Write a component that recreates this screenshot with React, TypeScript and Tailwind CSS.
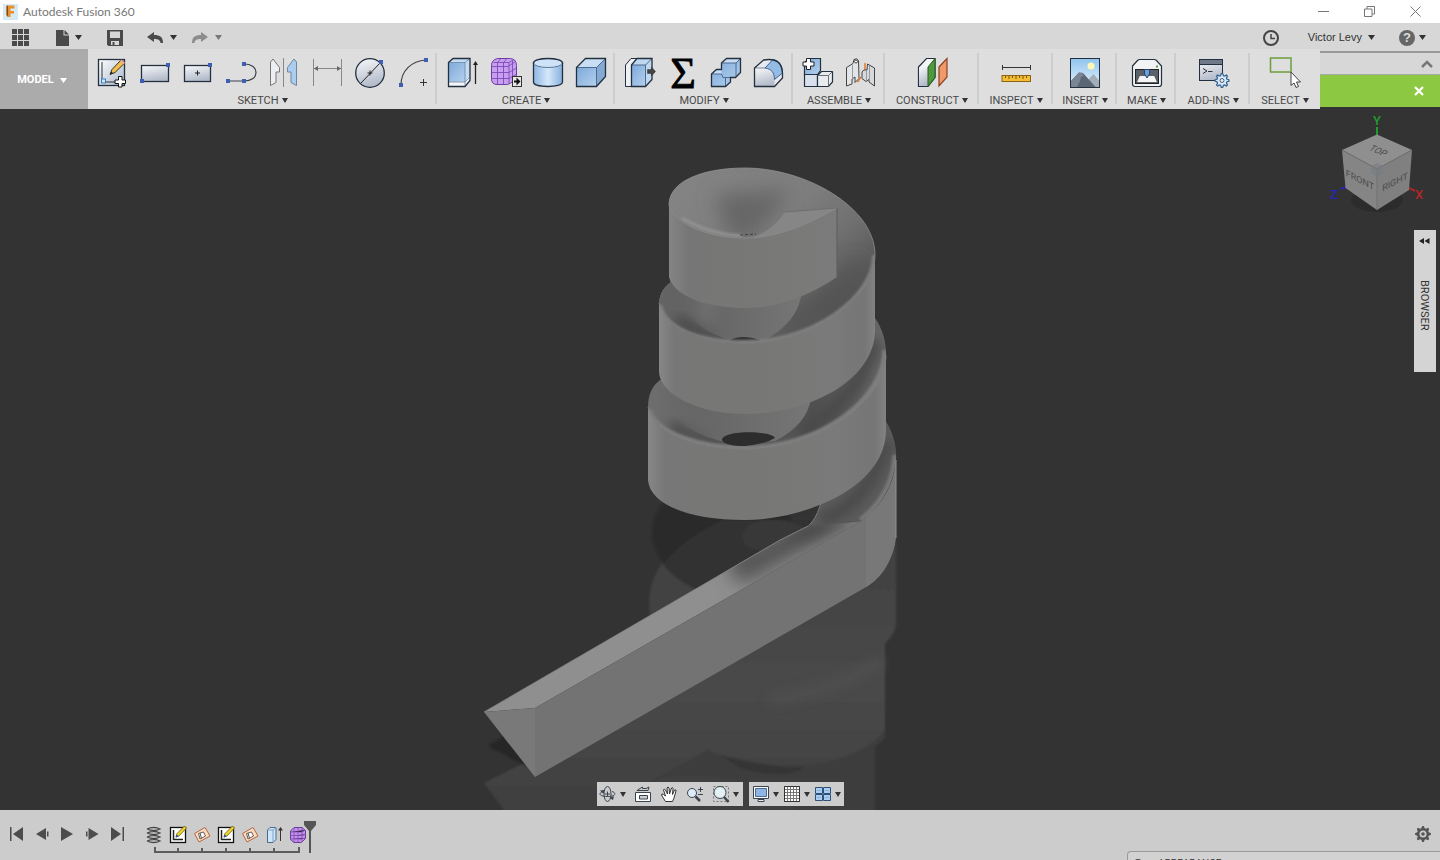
import React from 'react';
import clsx from 'clsx';

const INK = '#23303f';
const NODE = '#3f5fb5';

function Caret({ className, small }: { className?: string; small?: boolean }) {
  return (
    <svg
      viewBox="0 0 7 5"
      preserveAspectRatio="none"
      className={clsx('h-[5px] shrink-0', small ? 'w-[6px]' : 'w-[7px]', className ?? 'text-[#333]')}
      aria-hidden="true"
    >
      <path d="M0 0h7L3.500 5z" fill="currentColor" />
    </svg>
  );
}

function Node({ x, y }: { x: number; y: number }) {
  return <rect x={x - 2} y={y - 2} width="4" height="4" fill={NODE} />;
}

function Art({ children }: { children: React.ReactNode }) {
  return (
    <svg viewBox="0 0 32 32" className="size-8 overflow-visible" fill="none" aria-hidden="true">
      {children}
    </svg>
  );
}

// ---- ribbon artwork ----

const SketchIcon = () => (
  <Art>
    <rect x="2.500" y="2.500" width="26" height="26" fill="url(#paper)" stroke={INK} strokeWidth="1.300" />
    <path d="M6 5v20h19" stroke="#333" />
    <rect x="5.500" y="22" width="4" height="4" fill="#cfe3f8" stroke="#3c7cc0" />
    <path d="M14 17.500l2-5L25.500 2.500l3.500 3.200L19 15.500z" fill="#f2c14b" stroke="#3a3020" />
    <path d="M24 4l1.500-1.500 3.500 3.200-1.700 1.700z" fill="#e9a9a0" />
    <path d="M14 17.500l1.200-3 2 1.800z" fill="#222" />
    <path d="M22.500 19.500h3.500v3.500h3.500v3.500h-3.500v3.500h-3.500v-3.500h-3.500v-3.500h3.500z" fill="#fff" stroke="#111" />
  </Art>
);

const RectIcon = () => (
  <Art>
    <rect x="2.500" y="8.500" width="27" height="16" fill="url(#steel)" stroke={INK} strokeWidth="1.300" />
    <Node x={29} y={8} />
    <Node x={3} y={24} />
  </Art>
);

const CenterRectIcon = () => (
  <Art>
    <rect x="2.500" y="8.500" width="26" height="16" fill="url(#steel)" stroke={INK} strokeWidth="1.300" />
    <path d="M15.500 13.500v5M13 16h5" stroke="#222" />
    <Node x={28} y={8} />
  </Art>
);

const LineIcon = () => (
  <Art>
    <path d="M3 24h16c7 0 12-3 12-8.500S26 7 19 7" stroke="#3b4148" strokeWidth="1.200" />
    <Node x={19} y={7} />
    <Node x={3} y={24} />
    <Node x={19} y={24} />
  </Art>
);

const MirrorIcon = () => (
  <Art>
    <path d="M15.500 1v29" stroke="#888" />
    <path d="M2.500 5l2.500-3 6.500 8.500v4.500h-3.500v10.500L2.500 28.500z" fill="#eceff1" stroke="#777" />
    <path d="M28.500 5L26 2l-6.500 8.500v4.500H23v10.500l5.500 3z" fill="#a9cdf0" stroke="#71859b" />
  </Art>
);

const DimensionIcon = () => (
  <Art>
    <path d="M2.500 2v27M30.500 2v27M3 11.500h27" stroke="#888" />
    <path d="M3 11.500l4-2.500v5zM30 11.500L26 9v5z" fill="#666" />
  </Art>
);

const CircleIcon = () => (
  <Art>
    <circle cx="16" cy="16" r="14.300" fill="url(#steel)" stroke={INK} strokeWidth="1.300" />
    <path d="M7 26L27 5M16 13.500v5M13.500 16h5" stroke="#222" />
    <Node x={27} y={5} />
  </Art>
);

const ArcIcon = () => (
  <Art>
    <path d="M4 28C4 14 14 4 29 3" stroke="#444" strokeWidth="1.200" />
    <path d="M26.500 22v7M23 25.500h7" stroke="#333" />
    <Node x={4} y={28} />
    <Node x={29} y={3} />
  </Art>
);

const ExtrudeIcon = () => (
  <Art>
    <path d="M2.500 5.500L7 1.500h17v22l-5 6H2.500z" fill="#c5dbf2" />
    <path d="M2.500 5.500h16.500v19H2.500z" fill="url(#blue)" />
    <path d="M2.500 25h16.500l5-6v4.500l-5 6H2.500z" fill="#f4f6f8" />
    <path d="M2.500 5.500h16.500L24 1.500M19 5.500v24M2.500 25h16.500l5-5" stroke="#6b86a5" strokeWidth=".8" />
    <path d="M2.500 5.500L7 1.500h17v22l-5 6H2.500z" stroke={INK} strokeWidth="1.300" />
    <path d="M29.500 6v21" stroke="#222" strokeWidth="1.300" />
    <path d="M27 8l2.500-4L32 8z" fill="#222" />
  </Art>
);

const FormIcon = () => (
  <Art>
    <path d="M8.500 1.500h12q7 0 7 7v10q0 3-3 5.500t-6 3.500H8q-5.500 0-5.500-6V8.500q0-5.500 6-7z" fill="#c99ef0" stroke="#6b3fa0" />
    <path
      d="M3 9.500h16l7.500-5M3 15.500h17l7.500-4.500M3 21.500h17l7-4M8.500 5.500v22M14.500 5.500v22M20 6v21M4.500 5.500h15.500L25 2.500M8.500 5.500L12 1.500M14.500 5.500L18 1.500M23.500 3.500v21"
      stroke="#7c4cb8"
      strokeWidth=".9"
    />
    <rect x="23.500" y="19.500" width="9" height="10" fill="#e8e8e8" stroke="#333" />
    <path d="M25 23.500h2.500v-3l4 4-4 4v-3H25z" fill="#111" />
  </Art>
);

const CylinderIcon = () => (
  <Art>
    <path d="M1.500 6v19c0 6 29 6 29 0V6z" fill="url(#tube)" stroke={INK} strokeWidth="1.300" />
    <ellipse cx="16" cy="6" rx="14.500" ry="4.500" fill="#cfe3f8" stroke="#5d7794" />
    <path d="M1.500 7V6C1.500 0 30.500 0 30.500 6v1" stroke={INK} strokeWidth="1.300" />
  </Art>
);

const BoxIcon = () => (
  <Art>
    <path d="M1.500 10.500l9-9h20v18l-9 10h-20z" fill="#c9def4" />
    <path d="M1.500 10.500h20v19h-20z" fill="url(#blue)" />
    <path d="M21.500 10.500l9-9v18l-9 10z" fill="#84a9d2" />
    <path d="M1.500 10.500h20l9-9M21.500 10.500v19" stroke="#4d6b8e" />
    <path d="M1.500 10.500l9-9h20v18l-9 10h-20z" stroke={INK} strokeWidth="1.300" />
  </Art>
);

const PressPullIcon = () => (
  <Art>
    <path d="M1.500 8L7 1.500h8v28H1.500z" fill="#eef1f4" stroke={INK} />
    <path d="M7.500 8L13 1.500h15v21l-6.500 7h-14z" fill="#bfd8f0" />
    <path d="M7.500 8h14v21.500h-14z" fill="url(#blue)" />
    <path d="M7.500 8h14L28 1.500M21.500 8v21" stroke="#4d6b8e" />
    <path d="M7.500 8L13 1.500h15v21l-6.500 7h-14z" stroke={INK} strokeWidth="1.300" />
    <path d="M23.500 12.500h4V10l4 4.500-4 4.500v-2.500h-4z" fill="#444" stroke="#333" strokeWidth=".5" />
  </Art>
);

const SigmaIcon = () => (
  <Art>
    <text x="16" y="31" textAnchor="middle" fontSize="44" fontFamily="Liberation Serif, serif" fill="#000" stroke="#000" strokeWidth=".8">
      Σ
    </text>
  </Art>
);

const CombineIcon = () => (
  <Art>
    <path d="M1.500 17l5-4.500h5V6l5-4.500h14v14l-5 5h-5V25l-5 4.500h-14z" fill="url(#blue)" />
    <path d="M1.500 17l5-4.500h5V17zM11.500 6l5-4.500h14L26 6z" fill="#c9def4" />
    <path d="M1.500 17h10l1.500 3.500h7.500M11.500 6H26l4.500-4.500M26 6v14M15.500 21v8" stroke="#4d6b8e" />
    <path d="M1.500 17l5-4.500h5V6l5-4.500h14v14l-5 5h-5V25l-5 4.500h-14z" stroke={INK} strokeWidth="1.300" />
  </Art>
);

const FilletIcon = () => (
  <Art>
    <path d="M1.500 11l9-8c12-2 18.500 2 19 13v5l-8 8.500H1.500z" fill="#e7eaee" />
    <path d="M1.500 11H12c6 1 9.500 5 9.500 11.500v7h-20z" fill="url(#steel)" />
    <path d="M12 11l8-8.500c6 1 9 5 9.500 13.500l-8 6.500c0-7-3-10.500-9.500-11.500z" fill="#94bbe6" stroke="#41658f" />
    <path d="M1.500 11H12" stroke="#7b8894" />
    <path d="M1.500 11l9-8c12-2 18.500 2 19 13v5l-8 8.500H1.500z" stroke={INK} strokeWidth="1.300" />
  </Art>
);

const ComponentIcon = () => (
  <Art>
    <path d="M2.500 6l4-4.500h12v12l-3 4H2.500z" fill="url(#blue)" stroke={INK} strokeWidth="1.200" />
    <path d="M2.500 17.500h13v12h-13z" fill="#d9e2ec" stroke={INK} strokeWidth="1.200" />
    <path d="M15.500 18.500l4-4h11v10.500l-4 4.500h-11z" fill="#e9ecef" stroke={INK} strokeWidth="1.200" />
    <path d="M15.500 18.500h11l4-4M26.500 18.500v11" stroke="#68737e" />
    <path d="M4.500 1.500h4v3.500h3.500v4H8.500v3.500h-4V9H1V5h3.500z" fill="#fff" stroke="#222" />
  </Art>
);

const JointIcon = () => (
  <Art>
    <path d="M1.500 10.500L8 6.500l1-4q3-2 4.500 1l.500 18-4 4V20l-3 2v5l-5.500 2z" fill="#e3e6e9" stroke="#444" />
    <circle cx="11" cy="4.500" r="1.500" fill="#fff" stroke="#444" />
    <path d="M7.500 8v14" stroke="#999" />
    <path d="M12.500 25l3.500-5M20 6v7" stroke="#e47a2e" strokeWidth="1.500" />
    <path d="M17 15q1-3 5-2l.500-6 7 4v18l-5.500-4v-2.500l-3 2-4-3z" fill="#d6dade" stroke="#444" />
    <path d="M21.500 14v9M24.500 9v14" stroke="#999" />
  </Art>
);

const ConstructIcon = () => (
  <Art>
    <path d="M2.500 10l8-8.500h8.500v19l-7 9H2.500z" fill="#f4f6f8" stroke={INK} strokeWidth="1.200" />
    <path d="M3 10.500h9v18.500H3z" fill="url(#steel)" />
    <path d="M12 10l7-8.500v19l-7 9z" fill="#4f9a3c" stroke="#245a1c" />
    <path d="M23 10l8-8.500v18.500l-8 9z" fill="#f09a6a" stroke="#8b4220" strokeWidth="1.200" />
  </Art>
);

const InspectIcon = () => (
  <Art>
    <path d="M2.500 8v5M30.500 8v5M3 10.500h27" stroke="#333" />
    <rect x="2" y="18.500" width="28.500" height="6" fill="#f3bd35" stroke="#8c6414" />
    <path d="M5.500 19v2M9 19v3M12.500 19v2M16 19v3M19.500 19v2M23 19v3M26.500 19v2" stroke="#6b4a0c" strokeWidth=".9" />
  </Art>
);

const InsertIcon = () => (
  <Art>
    <rect x="1.500" y="1.500" width="29" height="29" fill="url(#sky)" />
    <circle cx="22" cy="9" r="3.500" fill="#fff6b8" />
    <path d="M12 30l12.500-13 6 7v6.500z" fill="#a3adb8" />
    <path d="M2 24l8-8.500 4 .5 13 14.500H2z" fill="#5b6573" />
    <path d="M10 15.500l3 .5 2 3-3 1-1 4-3 6H2v-6z" fill="#7b8694" />
    <rect x="1.500" y="1.500" width="29" height="29" stroke={INK} />
  </Art>
);

const MakeIcon = () => (
  <Art>
    <path d="M1.500 9l5-5.500q1-1 2.500-1h14q1.500 0 2.500 1l5 5.500v18q0 2.500-2.500 2.500H4q-2.500 0-2.500-2.500z" fill="#f1f2f3" stroke={INK} strokeWidth="1.200" />
    <rect x="4.500" y="12.500" width="23" height="14" fill="#59616a" stroke="#222" />
    <path d="M8.500 18.500h15l3 7h-21z" fill="#f3f5f7" stroke="#333" strokeWidth=".6" />
    <path d="M13.500 12.500h5v4.500L16 21l-2.500-4z" fill="#6d9fd6" stroke="#24476f" />
    <rect x="25" y="8.500" width="2" height="2" fill="#4f9a3c" />
  </Art>
);

function gearPath(cx: number, cy: number, outer: number, inner: number) {
  const pts: string[] = [];
  for (let i = 0; i < 32; i++) {
    const r = i % 4 < 2 ? outer : inner;
    const a = ((i - 0.5) / 32) * Math.PI * 2;
    pts.push(`${(cx + r * Math.cos(a)).toFixed(2)} ${(cy + r * Math.sin(a)).toFixed(2)}`);
  }
  return `M${pts.join('L')}Z`;
}

const AddInsIcon = () => (
  <Art>
    <rect x="2.500" y="2.500" width="23" height="21" fill="url(#steel)" stroke={INK} />
    <path d="M3 3h22v4H3z" fill="#6f7987" />
    <path d="M2.500 7.500h23" stroke={INK} />
    <path d="M6 11.500l4 2.500-4 2.500M11 14.500h4.500" stroke="#333" />
    <path d={gearPath(25, 23.500, 7, 5)} fill="#dcebfa" stroke="#34618f" strokeWidth="1.200" />
    <circle cx="25" cy="23.500" r="2" fill="#eee" stroke="#34618f" />
  </Art>
);

const SelectIcon = () => (
  <Art>
    <rect x="1.500" y="1" width="20.500" height="14" stroke="#6c9f3c" strokeWidth="1.500" />
    <path d="M22 15v13.500l3-2.500 2 4.500 2.500-1-2-4.500h4z" fill="#fff" stroke="#444" />
  </Art>
);

const ribbon = [
  { label: 'Sketch', width: 'w-[349px]', tools: [
    ['Create sketch', SketchIcon], ['Two point rectangle', RectIcon], ['Center rectangle', CenterRectIcon], ['Line', LineIcon],
    ['Mirror', MirrorIcon], ['Dimension', DimensionIcon], ['Circle', CircleIcon], ['Arc', ArcIcon],
  ] },
  { label: 'Create', width: 'w-[178px]', tools: [['Extrude', ExtrudeIcon], ['Form', FormIcon], ['Cylinder', CylinderIcon], ['Box', BoxIcon]] },
  { label: 'Modify', width: 'w-[178px]', tools: [['Press pull', PressPullIcon], ['Parameters', SigmaIcon], ['Combine', CombineIcon], ['Fillet', FilletIcon]] },
  { label: 'Assemble', width: 'w-[92px]', tools: [['New component', ComponentIcon], ['Joint', JointIcon]] },
  { label: 'Construct', width: 'w-[94px]', tools: [['Offset plane', ConstructIcon]] },
  { label: 'Inspect', width: 'w-[74px]', tools: [['Measure', InspectIcon]] },
  { label: 'Insert', width: 'w-[64px]', tools: [['Insert image', InsertIcon]] },
  { label: 'Make', width: 'w-[59px]', tools: [['3D print', MakeIcon]] },
  { label: 'Add-Ins', width: 'w-[74px]', tools: [['Scripts', AddInsIcon]] },
  { label: 'Select', width: 'w-[70px]', tools: [['Select tool', SelectIcon]] },
] as { label: string; width: string; tools: [string, React.FC][] }[];

function SharedGradients() {
  return (
    <svg className="absolute size-0" aria-hidden="true">
      <defs>
        <linearGradient id="paper" x1="0" y1="0" x2="1" y2="1">
          <stop offset="0" stopColor="#fff" />
          <stop offset="1" stopColor="#a9b6cc" />
        </linearGradient>
        <linearGradient id="steel" x1="0" y1="0" x2=".3" y2="1">
          <stop offset="0" stopColor="#f8f9fb" />
          <stop offset="1" stopColor="#b4bccb" />
        </linearGradient>
        <linearGradient id="blue" x1="0" y1="0" x2="1" y2="1">
          <stop offset="0" stopColor="#7da9da" />
          <stop offset="1" stopColor="#b5d1ee" />
        </linearGradient>
        <linearGradient id="tube">
          <stop offset="0" stopColor="#8db6e4" />
          <stop offset=".5" stopColor="#d5e8fa" />
          <stop offset="1" stopColor="#86b0de" />
        </linearGradient>
        <linearGradient id="sky" x1="0" y1="0" x2="0" y2="1">
          <stop offset="0" stopColor="#8fc4ee" />
          <stop offset="1" stopColor="#e6f3fc" />
        </linearGradient>
      </defs>
    </svg>
  );
}

function TitleBar() {
  return (
    <header className="flex h-[23px] items-center bg-white pl-[3px] pr-[2px]">
      <svg viewBox="0 0 15 16" className="h-4 w-[15px]" aria-hidden="true">
        <rect width="15" height="16" fill="#d4ebf5" />
        <path d="M4 1.500h7.500V4.500H7.500V7h3.500v2.500H7.500V13H5L3.500 11V2z" fill="#e8912f" />
        <path d="M3.500 2L5 1.500V13l-1.500-2z" fill="#8d4a12" />
      </svg>
      <h1 className="ml-[5px] flex-1 font-[Lato,sans-serif] text-[12px] text-[#777]">Autodesk Fusion 360</h1>
      <button aria-label="Minimize" className="flex w-[46px] justify-center">
        <svg viewBox="0 0 11 11" className="size-[11px]" stroke="#777"><path d="M0 5.500h11" /></svg>
      </button>
      <button aria-label="Restore" className="flex w-[46px] justify-center">
        <svg viewBox="0 0 11 11" className="size-[11px]" fill="none" stroke="#777">
          <path d="M.500 3h7.500v7.500H.500zM3 3V.500h7.500V8H8" />
        </svg>
      </button>
      <button aria-label="Close" className="flex w-[46px] justify-center">
        <svg viewBox="0 0 11 11" className="size-[11px]" stroke="#777"><path d="M.500.500l10 10M10.500.500l-10 10" /></svg>
      </button>
    </header>
  );
}

function QuickBar() {
  return (
    <div className="flex h-[26px] items-center bg-[#d7d7d7] pl-3 pr-[14px] pt-[3px] text-[#4a4a4a]">
      <button aria-label="Data panel">
        <svg viewBox="0 0 17 17" className="size-[17px]" fill="currentColor">
          <path d="M0 0h5v5H0zM6 0h5v5H6zM12 0h5v5h-5zM0 6h5v5H0zM6 6h5v5H6zM12 6h5v5h-5zM0 12h5v5H0zM6 12h5v5H6zM12 12h5v5h-5z" />
        </svg>
      </button>
      <button aria-label="File" className="ml-[27px] flex items-center gap-[6px]">
        <svg viewBox="0 0 13 16" className="h-4 w-[13px]" fill="currentColor">
          <path d="M0 0h7.500v5.500H13V16H0z" />
          <path d="M8.500 0L13 4.500H8.500z" />
        </svg>
        <Caret />
      </button>
      <button aria-label="Save" className="ml-[25px]">
        <svg viewBox="0 0 16 16" className="size-4">
          <path d="M0 0h16v16H1.500L0 14.500z" fill="currentColor" />
          <path d="M3 1.500h10V8H3zM4 11h8v4H4z" fill="#d7d7d7" />
          <path d="M5.500 12h2v3h-2z" fill="currentColor" />
        </svg>
      </button>
      <button aria-label="Undo" className="ml-6 flex items-center gap-[7px]">
        <svg viewBox="0 0 16 12" className="h-3 w-4" fill="currentColor">
          <path d="M0 5l7-5v3c6 0 9 2 9 8h-2.500c0-2.500-2-4-6.500-4v3z" />
        </svg>
        <Caret />
      </button>
      <button aria-label="Redo" className="ml-[15px] flex items-center gap-[7px] text-[#8d8d8d]">
        <svg viewBox="0 0 16 12" className="h-3 w-4" fill="currentColor">
          <path d="M16 5L9 0v3C3 3 0 5 0 11h2.500c0-2.500 2-4 6.500-4v3z" />
        </svg>
        <Caret className="text-[#777]" />
      </button>
      <div className="flex-1" />
      <button aria-label="Job status">
        <svg viewBox="0 0 16 16" className="size-4" fill="none" stroke="#444" strokeWidth="2">
          <circle cx="8" cy="8" r="7" />
          <path d="M8 4v4.500h4" strokeWidth="1.500" />
        </svg>
      </button>
      <button className="ml-[29px] flex items-center gap-[6px] font-['Liberation_Sans',sans-serif] text-[11px] text-[#333]">
        Victor Levy
        <Caret />
      </button>
      <button aria-label="Help" className="ml-6 flex items-center gap-1">
        <span className="flex size-4 items-center justify-center rounded-full bg-[#666] font-['Liberation_Sans',sans-serif] text-[13px] font-bold text-[#ddd]">
          ?
        </span>
        <Caret />
      </button>
    </div>
  );
}

function Ribbon() {
  return (
    <div className="flex">
      <button className="flex h-[60px] w-[88px] shrink-0 items-center justify-center gap-[6px] bg-[#ababab] pt-[2px] pr-1 text-[11px] font-bold text-white">
        MODEL
        <Caret className="text-white" />
      </button>
      <div className="flex h-[60px] flex-1 bg-[#dedede]">
        {ribbon.map((group) => (
          <section key={group.label} className={clsx('relative flex shrink-0 flex-col items-center pt-2', group.width)}>
            <div className="flex">
              {group.tools.map(([name, Icon]) => (
                <button key={name} aria-label={name} className="flex w-[43px] justify-center">
                  <Icon />
                </button>
              ))}
            </div>
            <button className="mt-[5px] flex items-center gap-[3px] text-[11px] leading-[13px] text-[#484848] uppercase">
              {group.label}
              <Caret small />
            </button>
            {group.label !== 'Select' && <span className="absolute top-1 right-0 h-[51px] w-[2px] bg-[#cdcdcd]" />}
          </section>
        ))}
      </div>
      <div className="w-[120px] shrink-0">
        <div className="h-1 border-b-2 border-[#999] bg-[#d7d7d7]" />
        <div className="flex h-[22px] justify-end border-b border-[#aaa] bg-[#d7d7d7] pr-[7px]">
          <button aria-label="Collapse ribbon">
            <svg viewBox="0 0 12 8" className="h-2 w-3" fill="none" stroke="#777" strokeWidth="2.500">
              <path d="M1 7l5-5 5 5" />
            </svg>
          </button>
        </div>
        <div className="flex h-8 items-center justify-end bg-[#8dc843] pr-4">
          <button aria-label="Dismiss notice">
            <svg viewBox="0 0 10 10" className="size-[10px]" stroke="#fff" strokeWidth="2.200">
              <path d="M1 1l8 8M9 1L1 9" />
            </svg>
          </button>
        </div>
      </div>
    </div>
  );
}

// Helix body, its ramp and the floor reflection, in canvas coordinates.
function Model() {
  return (
    <svg viewBox="0 109 1440 701" preserveAspectRatio="xMidYMid slice" className="absolute inset-0 size-full" role="img" aria-label="Helix model">
      <defs>
        <linearGradient id="band">
          <stop offset="0" stopColor="#878787" />
          <stop offset=".07" stopColor="#777" />
          <stop offset=".42" stopColor="#777775" />
          <stop offset=".8" stopColor="#7a7a7a" />
          <stop offset=".95" stopColor="#767676" />
          <stop offset="1" stopColor="#828282" />
        </linearGradient>
        <linearGradient id="block">
          <stop offset="0" stopColor="#848484" />
          <stop offset=".12" stopColor="#767676" />
          <stop offset=".5" stopColor="#787876" />
          <stop offset="1" stopColor="#7b7b7b" />
        </linearGradient>
        <linearGradient id="crown" gradientUnits="userSpaceOnUse" x1="700" y1="170" x2="830" y2="320">
          <stop offset="0" stopColor="#838383" />
          <stop offset=".45" stopColor="#7d7d7d" />
          <stop offset=".7" stopColor="#707070" />
          <stop offset="1" stopColor="#525252" />
        </linearGradient>
        <linearGradient id="gully" gradientUnits="userSpaceOnUse" x1="648" y1="0" x2="886" y2="0">
          <stop offset="0" stopColor="#6e6e6e" />
          <stop offset=".3" stopColor="#626262" />
          <stop offset=".7" stopColor="#505050" />
          <stop offset="1" stopColor="#686868" />
        </linearGradient>
        <linearGradient id="bowl">
          <stop offset="0" stopColor="#666" stopOpacity="0" />
          <stop offset=".4" stopColor="#686868" />
          <stop offset="1" stopColor="#767676" />
        </linearGradient>
        <linearGradient id="mirror" gradientUnits="userSpaceOnUse" x1="0" y1="560" x2="0" y2="810">
          <stop offset="0" stopColor="#424242" />
          <stop offset=".5" stopColor="#494949" />
          <stop offset="1" stopColor="#404040" />
        </linearGradient>
        <filter id="haze" x="-60%" y="-60%" width="220%" height="220%"><feGaussianBlur stdDeviation="10" /></filter>
        <filter id="soft" x="-50%" y="-50%" width="200%" height="200%"><feGaussianBlur stdDeviation="6" /></filter>
        <filter id="faint" x="-20%" y="-20%" width="140%" height="140%"><feGaussianBlur stdDeviation="1.200" /></filter>
        <clipPath id="crownClip">
          <path d="M669 205C669 180 705 168 745 168C805 168 875 207 875 255C875 300 810 343 745 343C700 343 663 328 659 303C660 293 664 287 670 283Z" />
        </clipPath>
        <clipPath id="gullyClip">
          <path d="M648 407C648 395 652 386 660 380H760L875 318C882 328 886 340 886 355C886 400 820 449 745 449C700 449 653 435 648 407Z" />
        </clipPath>
        <clipPath id="lowClip">
          <path d="M821 503L885 420C893 432 897 446 896 460C893 485 882 506 861 521L808 526C815 520 818 512 821 503Z" />
        </clipPath>
        <clipPath id="rampClip">
          <path d="M484 712L780 540L808 526L861 521L535 708Z" />
        </clipPath>
      </defs>

      {/* floor reflection */}
      <g filter="url(#faint)">
        <path d="M666 500C640 528 645 570 720 597L800 530L780 505Z" fill="#292929" />
        <path d="M650 613C646 575 670 545 722 520L815 520L760 560L652 620Z" fill="#303030" />
        <path d="M650 616C647 595 652 577 662 563C670 573 680 582 697 590Z" fill="#424242" />
        <path d="M742 536C744 520 775 514 805 527L765 551C750 550 743 545 742 536Z" fill="#393939" />
        <path d="M896 540V622C896 632 890 638 885 644V728C885 737 880 742 875 745V814H507L484 783L540 755L860 580Z" fill="url(#mirror)" />
        <path d="M708 750C750 772 850 776 885 730V738C880 744 876 745 875 747V814H600L640 787Z" fill="#3c3c3c" />
        <path d="M720 755C750 762 780 768 805 767C790 778 765 775 740 768Z" fill="#353535" opacity=".8" />
        <path d="M600 814L660 778C715 770 770 782 800 814Z" fill="#404040" />
      </g>
      <path d="M770 700Q840 690 882 660" stroke="#515151" strokeWidth="8" fill="none" filter="url(#soft)" />
      <path d="M488 746L504 736L530 768Z" fill="#272727" filter="url(#faint)" />

      {/* fourth turn and ramp */}
      <g clipPath="url(#lowClip)">
        <path d="M800 410H900V530H800Z" fill="#5c5c5c" />
        <path d="M820 520Q868 505 888 440" stroke="#4a4a4a" strokeWidth="14" fill="none" filter="url(#soft)" />
        <path d="M861 521Q894 495 896 455" stroke="#777" strokeWidth="7" fill="none" filter="url(#faint)" />
      </g>
      <g clipPath="url(#rampClip)">
        <path d="M480 500H870V720H480Z" fill="#8f8f8f" />
        <path d="M725 560L808 520L880 510L800 552L740 585Z" fill="#505050" filter="url(#haze)" />
        <path d="M775 545L808 524L850 518L815 536Z" fill="#4a4a4a" filter="url(#soft)" />
      </g>
      <path d="M535 708L861 521Q894 497 896 458V535C895 556 881 580 861 590L535 777Z" fill="#737373" />
      <path d="M866 517Q894 495 896 458V535C895 556 883 578 866 587Z" fill="#787878" />
      <path d="M896 460V538" stroke="#929292" />
      <path d="M484 712L535 708V777Z" fill="#797979" />
      <path d="M484 712L780 540L808 526C815 520 818 512 821 503" stroke="#858585" strokeWidth=".8" fill="none" />
      <path d="M808 526L861 521" stroke="#525252" strokeWidth=".7" />

      {/* third turn */}
      <g clipPath="url(#gullyClip)">
        <path d="M640 310H890V460H640Z" fill="url(#gully)" />
        <path d="M670 425Q690 438 730 442" stroke="#4c4c4c" strokeWidth="12" fill="none" filter="url(#soft)" />
        <path d="M800 432Q855 405 876 340" stroke="#484848" strokeWidth="14" fill="none" filter="url(#soft)" />
        <path d="M655 388Q675 435 735 444L775 441Q807 425 811 398L780 370Z" fill="url(#bowl)" />
        <path d="M648 410C655 435 700 449 745 449C820 449 886 400 886 350" stroke="#7e7e7e" strokeWidth="7" fill="none" filter="url(#faint)" />
        <path d="M722 440C722 430 770 430 775 438Q765 444 745 446Q725 446 722 440Z" fill="#2d2d2d" />
      </g>
      <path d="M648 407C653 435 700 449 745 449C820 449 886 400 886 355V430C886 490 800 520 745 520C690 520 650 505 648 480Z" fill="url(#band)" />
      <path d="M648 407C653 435 700 449 745 449C820 449 886 400 886 355" stroke="#838383" strokeWidth=".8" fill="none" />

      {/* second turn and crown */}
      <g clipPath="url(#crownClip)">
        <path d="M640 160H890V350H640Z" fill="url(#crown)" />
        <path d="M650 270H700V350H650Z" fill="#646464" filter="url(#soft)" />
        <path d="M675 320Q700 335 735 338" stroke="#4c4c4c" strokeWidth="14" fill="none" filter="url(#soft)" />
        <path d="M780 322Q840 300 858 262" stroke="#505050" strokeWidth="12" fill="none" filter="url(#haze)" />
        <path d="M715 195L790 190L765 225L748 240H730Z" fill="#666" filter="url(#haze)" />
        <path d="M675 290Q690 332 735 341L765 340Q797 322 801 296Z" fill="url(#bowl)" />
        <path d="M730 340Q742 334 760 340V343H730Z" fill="#333" />
        <path d="M659 305C665 331 700 343 745 343C810 343 875 300 875 255" stroke="#7e7e7e" strokeWidth="6" fill="none" filter="url(#faint)" />
      </g>
      <path d="M659 303C665 330 700 343 745 343C810 343 875 300 875 255V330C875 380 810 414 745 414C700 414 660 395 659 372Z" fill="url(#band)" />
      <path d="M659 303C665 330 700 343 745 343C810 343 875 300 875 255" stroke="#838383" strokeWidth=".8" fill="none" />
      <path d="M669 205C669 180 705 168 745 168C805 168 875 207 875 255" stroke="#909090" strokeWidth=".8" fill="none" />

      {/* first turn */}
      <path d="M785 212L837 208Q790 236 750 238Q772 232 785 212Z" fill="#868686" />
      <path d="M785 212L837 208" stroke="#6a6a6a" strokeWidth=".8" />
      <path d="M682 218Q708 234 742 236" stroke="#939393" strokeWidth="3" fill="none" filter="url(#faint)" />
      <path d="M669 205C675 225 710 238 745 238C780 238 812 222 837 208V277C810 295 780 308 745 308C710 308 675 298 669 277Z" fill="url(#block)" />
      <path d="M669 205C675 225 710 238 745 238C780 238 812 222 837 208" stroke="#8a8a8a" fill="none" />
      <path d="M837 208V277" stroke="#5d5d5d" />
      <path d="M740 235l16-1" stroke="#3d3d3d" strokeDasharray="3 2" />
    </svg>
  );
}

function ViewCube() {
  return (
    <svg viewBox="0 0 110 110" className="absolute top-[3px] right-[5px] size-[110px]" fontFamily="Roboto, sans-serif" fontSize="13">
      <ellipse cx="52" cy="88" rx="26" ry="12" fill="#2c2c2c" />
      <path d="M52 15v8" stroke="#1f9d2c" strokeWidth="2" />
      <path d="M21 75l-5 2" stroke="#2727b5" strokeWidth="2" />
      <path d="M84 76l6 3" stroke="#a52727" strokeWidth="2" />
      <path d="M17 38L52 22.500L87 38L52 57Z" fill="#8f8f8f" />
      <path d="M17 38L52 57V98L20.500 76Z" fill="#858585" />
      <path d="M87 38L52 57V98L84 78Z" fill="#808080" />
      <path d="M17 38L52 57L87 38M52 57V98" stroke="#6c6c6c" strokeWidth=".8" fill="none" />
      <path d="M46 54l6-3 6 3v7l-6 4-6-4z" fill="#777c83" opacity=".6" />
      <text x="52" y="13" textAnchor="middle" fontWeight="500" fill="#1f9d2c">Y</text>
      <text x="9" y="87" textAnchor="middle" fontWeight="500" fill="#2727b5">Z</text>
      <text x="94" y="87" textAnchor="middle" fontWeight="500" fill="#b52727">X</text>
      <g fill="#4c4c4c" textAnchor="middle" fontSize="9">
        <text transform="translate(51 41) rotate(24) skewX(-20)">TOP</text>
        <text transform="translate(35 71) skewY(27)">FRONT</text>
        <text transform="translate(70 73) skewY(-27)">RIGHT</text>
      </g>
    </svg>
  );
}

function BrowserTab() {
  return (
    <button className="absolute top-[121px] right-1 flex h-[142px] w-[22px] flex-col items-center bg-[#d4d4d4] pt-2 pr-[2px] text-[11px] text-[#333]">
      <svg viewBox="0 0 11 6" className="h-[6px] w-[11px]" fill="#222" aria-hidden="true">
        <path d="M5 0v6L0 3zM10.500 0v6L5.500 3z" />
      </svg>
      <span className="mt-9 [writing-mode:vertical-rl]">BROWSER</span>
    </button>
  );
}

function Tool({ name, caret, children }: { name: string; caret?: boolean; children: React.ReactNode }) {
  return (
    <button aria-label={name} className="flex items-center gap-[3px]">
      <svg viewBox="0 0 18 18" className="size-[18px]" fill="none" stroke="#3a4450" aria-hidden="true">
        {children}
      </svg>
      {caret && <Caret small />}
    </button>
  );
}

function NavBar() {
  return (
    <div className="absolute inset-x-0 bottom-1 flex justify-center gap-[6px]">
      <div className="flex h-6 items-center gap-2 bg-[#cdcdcd] pr-1 pl-[2px]">
        <Tool name="Orbit" caret>
          <ellipse cx="8.500" cy="9" rx="3.500" ry="7.500" />
          <path d="M13 6.500c5 1.500 3.500 5-4.500 5S-1 8.500 3.500 6.500M8.500 6.500v5M6 9h5" />
          <path d="M1 5.500l4.500-.5-1 4zM10.500 13l4.500-2-1 4z" fill="#3a4450" stroke="none" />
        </Tool>
        <Tool name="Look at">
          <path d="M1.500 7.500h15v9h-15z" fill="#fff" />
          <path d="M5.500 10.500h8v3.500h-8z" fill="#cdcdcd" />
          <path d="M3.500 5l5-3v1.500h3.500l3-1.500-1 3.500H3z" />
        </Tool>
        <Tool name="Pan">
          <path
            d="M5.500 16.500L1.500 10q0-2 2-.5L5.500 11 3.500 5q.5-2 2 0L7.500 9 7 3q1-2 2 0l.5 6L11.500 3q1.500-1 1.500.5L12.500 9.500l2-4.500q2-.5 1.500 1L14 13l-1.500 3.500z"
            fill="#fff"
            stroke="#333"
          />
        </Tool>
        <Tool name="Zoom">
          <circle cx="6" cy="8" r="4.500" fill="#dcecfa" />
          <path d="M9.500 11.500l4.500 4.500" strokeWidth="2.500" />
          <path d="M14.500 2v5M12 4.500h5M12 9.500h5" />
        </Tool>
        <Tool name="Zoom window" caret>
          <path d="M1.500 1.500h15v15h-15z" strokeDasharray="2 2" stroke="#777" />
          <circle cx="8" cy="7.500" r="6" fill="#e3eff2" />
          <path d="M12 12l4.500 5" strokeWidth="2.500" />
        </Tool>
      </div>
      <div className="flex h-6 items-center gap-1 bg-[#cdcdcd] px-[3px]">
        <Tool name="Display settings" caret>
          <path d="M1.500 1.500h15v12h-15z" fill="#fff" />
          <path d="M3.500 3.500h11v8h-11z" fill="#8db6e4" stroke="#4d6b8e" />
          <path d="M6 14.500h6v2H6z" fill="#eee" />
        </Tool>
        <Tool name="Grid and snaps" caret>
          <path d="M1.500 1.500h15v15h-15z" fill="#fff" />
          <path d="M4.500 1.500v15M7.500 1.500v15M10.500 1.500v15M13.500 1.500v15M1.500 4.500h15M1.500 7.500h15M1.500 10.500h15M1.500 13.500h15" stroke="#777" />
          <path d="M1.500 1.500h15v15h-15z" stroke="#333" />
        </Tool>
        <Tool name="Viewports" caret>
          <path d="M1.500 2.500h7v6h-7zM9.500 2.500h7v6h-7zM1.500 9.500h7v6h-7zM9.500 9.500h7v6h-7z" fill="#a9cdf0" stroke="#2f5078" />
          <path d="M3 5.500h4M11 5.500h4M3 12.500h4M11 12.500h4" stroke="#8db0d5" />
        </Tool>
      </div>
    </div>
  );
}

const playback = [
  { name: 'Go to start', d: 'M0 1h1.500v14H0zM13 1v14L3 8z' },
  { name: 'Step back', d: 'M11 2v12L1 8zM12 5.500h1.500v5H12z' },
  { name: 'Play', d: 'M1 1l12 7-12 7z' },
  { name: 'Step forward', d: 'M3.500 2v12l10-6zM1 5.500h1.500v5H1z' },
  { name: 'Go to end', d: 'M12.500 1H14v14h-1.500zM1 1v14l10-7z' },
];

const features = {
  coil: (
    <g fill="#ddd" stroke="#444">
      <path d="M2 3q7-3 13 0-6 3-13 0M2 7q7-3 13 0-6 3-13 0M2 11q7-3 13 0-6 3-13 0M2 15q7-3 13 0-6 3-13 0" strokeWidth="1.300" />
    </g>
  ),
  sketch: (
    <g>
      <rect x="1.500" y="1.500" width="15" height="15" fill="#fff" stroke="#111" strokeWidth="1.300" />
      <path d="M4.500 4v9.500H14" stroke="#222" strokeWidth="1.500" fill="none" />
      <path d="M7 11l1-3.500L15.500 0l2 2-7.500 8z" fill="#ecd22a" stroke="#6b6016" strokeWidth=".8" />
      <path d="M6.500 11.500l1-3 2.200 2z" fill="#2b4fa0" />
    </g>
  ),
  plane: (
    <g>
      <path d="M1.500 7.500L12 1.500l5 8.500-11 6z" fill="#fbdcc6" stroke="#b4653a" />
      <path d="M5.500 7.500l5-1.500 2 4-5.500 3z" fill="#fff" stroke="#6d5a4e" />
      <path d="M7 7l1.500 5.500" stroke="#555" />
    </g>
  ),
  extrude: (
    <g>
      <path d="M2.500 4L5 1.500h6v12l-3 3H2.500z" fill="#cfe6fa" stroke="#4a6a8c" />
      <path d="M2.500 4H8v12M8 4l3-2.500" stroke="#7fa3c7" fill="none" />
      <path d="M15.500 3v12" stroke="#333" />
      <path d="M13 4.500L15.500 1 18 4.500z" fill="#333" />
    </g>
  ),
  form: (
    <g>
      <path d="M5 1.500h8l3.500 3v8l-4 4H5l-3.500-3V5z" fill="#c490ea" stroke="#6a3d9a" />
      <path d="M1.500 6H13l3-2M1.500 9.500H13l3.500-1M1.500 13H13l3-1M5 2v14M9 2v14M13 2v14" stroke="#8450bb" strokeWidth=".8" />
    </g>
  ),
};

const timeline: [string, keyof typeof features][] = [
  ['Coil1', 'coil'],
  ['Sketch1', 'sketch'],
  ['Plane1', 'plane'],
  ['Sketch2', 'sketch'],
  ['Plane2', 'plane'],
  ['Extrude1', 'extrude'],
  ['Form1', 'form'],
];

function Timeline() {
  return (
    <footer className="relative flex h-[50px] items-start bg-[#ccc] pr-2 pl-1">
      <div className="flex pt-4">
        {playback.map((p) => (
          <button key={p.name} aria-label={p.name} className="flex w-[25px] justify-center">
            <svg viewBox="0 0 14 16" className="h-4 w-[14px]" fill="#4c4c4c"><path d={p.d} /></svg>
          </button>
        ))}
      </div>
      <div className="ml-[13px] pt-4">
        <div className="flex">
          {timeline.map(([name, kind]) => (
            <button key={name} aria-label={name} className="flex w-6 justify-center">
              <svg viewBox="0 0 18 18" className="size-[18px]">{features[kind]}</svg>
            </button>
          ))}
        </div>
        <svg viewBox="0 0 168 9" className="mt-[2px] h-[9px] w-[168px]" fill="none" stroke="#5c5c5c" strokeWidth="2" aria-hidden="true">
          <path d="M13 1v5h144V1M36 2v4M60 2v4M84 2v4M108 2v4M132 2v4" />
        </svg>
      </div>
      <svg viewBox="0 0 12 32" className="-ml-[6px] mt-[11px] h-8 w-3" fill="#555" aria-hidden="true">
        <path d="M0 0h12v4L7 10v22H5V10L0 4z" />
      </svg>
      <div className="flex-1" />
      <button aria-label="Timeline settings" className="mt-[15px]">
        <svg viewBox="0 0 18 18" className="size-[18px]">
          <path d={gearPath(9, 9, 8, 6)} fill="#555" />
          <circle cx="9" cy="9" r="3.500" fill="#ccc" />
          <circle cx="9" cy="9" r="1.800" fill="#555" />
        </svg>
      </button>
      <div className="absolute right-0 bottom-0 flex h-[9px] w-[313px] items-start gap-4 overflow-hidden rounded-tl-sm border-t border-l border-[#999] bg-[#d2d2d2] pt-[5px] pl-[6px] text-[10px] leading-[13px] text-[#333]">
        <span className="mt-[2px] size-2 shrink-0 rounded-full bg-[#444]" />
        APPEARANCE
      </div>
    </footer>
  );
}

export default function App() {
  return (
    <div className="flex h-screen flex-col overflow-hidden bg-[#333] font-[Roboto,sans-serif]">
      <SharedGradients />
      <TitleBar />
      <QuickBar />
      <Ribbon />
      <main className="relative min-h-0 flex-1 overflow-hidden">
        <Model />
        <ViewCube />
        <BrowserTab />
        <NavBar />
      </main>
      <Timeline />
    </div>
  );
}
